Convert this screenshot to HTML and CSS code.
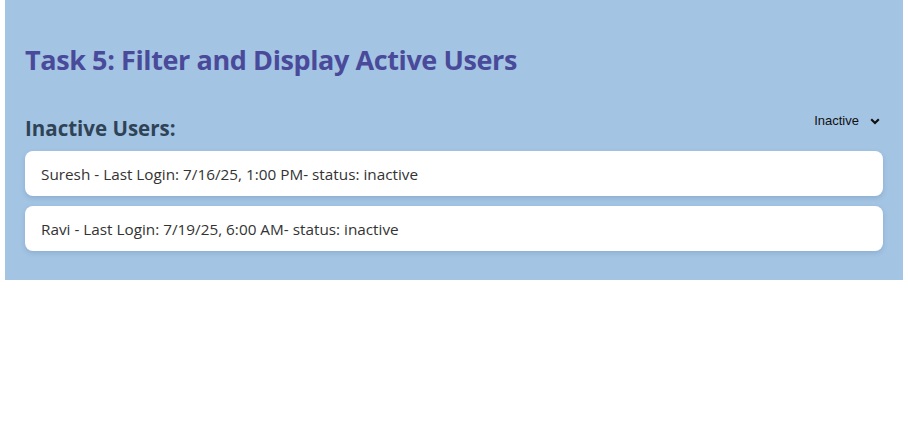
FILE: index.html
```html
<!DOCTYPE html>
<html>
<head>
<meta charset="utf-8">
<link rel="stylesheet" href="styles.css">
</head>
<body>
<div class="panel">
  <h1 class="title">Task 5: Filter and Display Active Users</h1>
  <div class="head-row">
    <h2 class="subtitle">Inactive Users:</h2>
    <div class="select">
      <span class="select-text">Inactive</span>
      <svg class="chevron" width="10" height="7" viewBox="0 0 10 7"><path d="M1.2 1.3 L5 5 L8.8 1.3" fill="none" stroke="#111" stroke-width="2.2"/></svg>
    </div>
  </div>
  <div class="list">
    <div class="card">Suresh - Last Login: 7/16/25, 1:00 PM- status: inactive</div>
    <div class="card">Ravi - Last Login: 7/19/25, 6:00 AM- status: inactive</div>
  </div>
</div>
</body>
</html>
```

FILE: styles.css
```css
html, body {
  margin: 0;
  padding: 0;
  background: #ffffff;
}
body {
  font-family: "Open Sans", "Noto Sans", sans-serif;
}
.panel {
  margin: 0 5px;
  background: #a4c4e4;
  padding: 20px 20px 29px;
  height: 280px;
  box-sizing: border-box;
}
.title {
  margin: 22px 0 0;
  font-size: 27px;
  letter-spacing: -0.4px;
  font-weight: 700;
  color: #4a4a9a;
  line-height: 36px;
}
.head-row {
  display: flex;
  justify-content: space-between;
  align-items: flex-start;
  margin-top: 36px;
}
.subtitle {
  margin: 0;
  font-size: 20.5px;
  font-weight: 700;
  color: #2f4356;
  line-height: 28px;
}
.select {
  display: flex;
  align-items: center;
  gap: 11px;
  margin-right: 3px;
  margin-top: -1px;
  font-family: "Liberation Sans", Arial, sans-serif;
  font-size: 13px;
  color: #111;
}
.chevron {
  margin-top: 1px;
}
.list {
  display: flex;
  flex-direction: column;
  gap: 10px;
  margin-top: 9px;
}
.card {
  background: #ffffff;
  border-radius: 8px;
  height: 45px;
  box-sizing: border-box;
  padding: 0 16px;
  display: flex;
  align-items: center;
  font-size: 15.3px;
  color: #333;
  box-shadow: 0 2px 5px rgba(40, 70, 110, 0.18);
}
```
